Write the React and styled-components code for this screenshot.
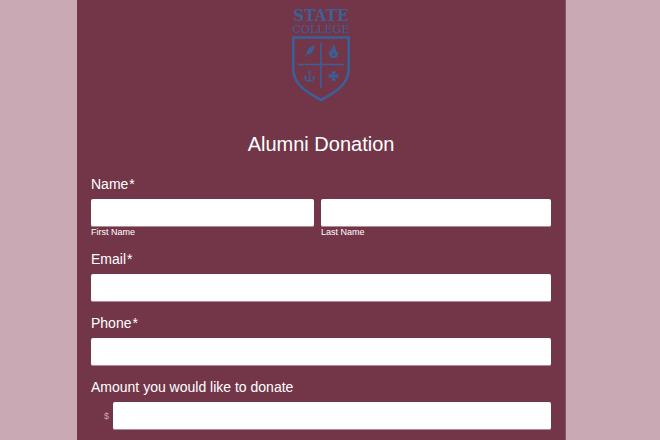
import React from "react";
import styled, { createGlobalStyle } from "styled-components";

const GlobalStyle = createGlobalStyle`
  * { box-sizing: border-box; }
  body {
    margin: 0;
    background: #c8a9b4;
    font-family: "Liberation Sans", Arial, sans-serif;
    color: #fff;
  }
`;

const Page = styled.main`
  display: flex;
  justify-content: center;
  min-height: 100vh;
  padding: 0 94px 0 77px;
`;

const Panel = styled.form`
  flex: 1;
  max-width: 640px;
  padding: 6px 14px 7px;
  background: #733649;
  border-right: 1px solid #8a5567;
`;

const Logo = styled.svg`
  display: block;
  width: 62px;
  height: 96px;
  margin: 0 auto;
  color: #3a6097;
`;

const Wordmark = styled.text`
  font: 11px "DejaVu Serif", serif;
`;

const State = styled.tspan`
  font: bold 17px "DejaVu Serif Condensed", "DejaVu Serif", serif;
`;

const Title = styled.h1`
  margin: 30px 0 20px;
  font-size: 20px;
  line-height: 24px;
  font-weight: 400;
  text-align: center;
`;

const Field = styled.div`
  margin: 0 0 13px;
`;

const NameField = styled.fieldset`
  margin: 0 0 13px;
  padding: 0;
  border: 0;
  min-width: 0;
`;

const Label = styled.label`
  display: block;
  padding: 0 0 7px;
  font-size: 14px;
  line-height: 16px;
`;

const Star = styled.span`
  margin-left: 1px;
`;

const NameRow = styled.div`
  display: grid;
  grid-template-columns: 223fr 230fr;
  gap: 7px;
`;

const Input = styled.input`
  display: block;
  width: 100%;
  min-width: 0;
  height: 28px;
  padding: 4px 8px;
  border: 1px solid #b08c98;
  border-width: 0 0 1px;
  border-radius: 2px;
  background: #fff;
  color: #333;
  font: 14px "Liberation Sans", Arial, sans-serif;
`;

const SubLabel = styled.label`
  display: block;
  font-size: 9px;
  line-height: 11px;
`;

const AmountRow = styled.div`
  display: flex;
  align-items: center;
  gap: 3px;
  padding-left: 13px;
`;

const Currency = styled.span`
  width: 6px;
  color: #c8a9b4;
  font-size: 9px;
  line-height: 12px;
`;

function CollegeLogo() {
  return (
    <Logo viewBox="0 0 62 96" role="img" aria-label="State College" fill="currentColor">
      <Wordmark textAnchor="middle">
        <State x="31" y="15">STATE</State>
        <tspan x="31" y="27">COLLEGE</tspan>
      </Wordmark>
      <path d="M3.3 31.5H58.7V63C58.7 77 48 85 31 94C14 85 3.300 77 3.300 63Z" fill="none" stroke="currentColor" strokeWidth="2.6" />
      <path d="M31 37V82M8 58.500H54" fill="none" stroke="currentColor" strokeWidth="1.6" />
      <path d="M14.500 50.500L17 46.500C17 42.500 21 40.500 25 39C24.500 42 23 44 22.500 45.500C21 48 19 48.500 17.800 47.800L15.300 50.800Z" />
      <path d="M43.500 38.500C42.500 42 41 43 41 45.500L39.500 44.500C38 49 40 52.200 43.500 52.200C47.200 52.200 48.500 49 47.500 45L46.200 46C46.200 43.500 45.200 42.500 45.200 41.500C45 40.500 44.500 39.500 43.500 38.500Z" />
      <path d="M43.500 46C42 48 42 50 43.500 50S45 48 43.500 46Z" fill="#733649" />
      <circle cx="19.500" cy="65.800" r="1.200" fill="none" stroke="currentColor" />
      <path d="M19.500 67V75M15 71C15 73.500 17 75 19.500 75C22 75 24 73.500 24 71" fill="none" stroke="currentColor" strokeWidth="1.300" />
      <path d="M14 72.500L14.700 69.300L17 71.700ZM25 72.500L24.300 69.300L22 71.700Z" />
      <path d="M41 65.200H46L44.300 69.200L48.300 67.500V72.500L44.300 70.800L46 74.800H41L42.700 70.800L38.700 72.500V67.500L42.700 69.200Z" />
    </Logo>
  );
}

export default function App() {
  return (
    <>
      <GlobalStyle />
      <Page>
        <Panel>
          <CollegeLogo />
          <Title>Alumni Donation</Title>
          <NameField>
            <Label as="legend">Name<Star>*</Star></Label>
            <NameRow>
              <div>
                <Input id="first" type="text" required />
                <SubLabel htmlFor="first">First Name</SubLabel>
              </div>
              <div>
                <Input id="last" type="text" required />
                <SubLabel htmlFor="last">Last Name</SubLabel>
              </div>
            </NameRow>
          </NameField>
          <Field>
            <Label htmlFor="email">Email<Star>*</Star></Label>
            <Input id="email" type="email" required />
          </Field>
          <Field>
            <Label htmlFor="phone">Phone<Star>*</Star></Label>
            <Input id="phone" type="tel" required />
          </Field>
          <div>
            <Label htmlFor="amount">Amount you would like to donate</Label>
            <AmountRow>
              <Currency>$</Currency>
              <Input id="amount" type="text" inputMode="decimal" />
            </AmountRow>
          </div>
        </Panel>
      </Page>
    </>
  );
}
